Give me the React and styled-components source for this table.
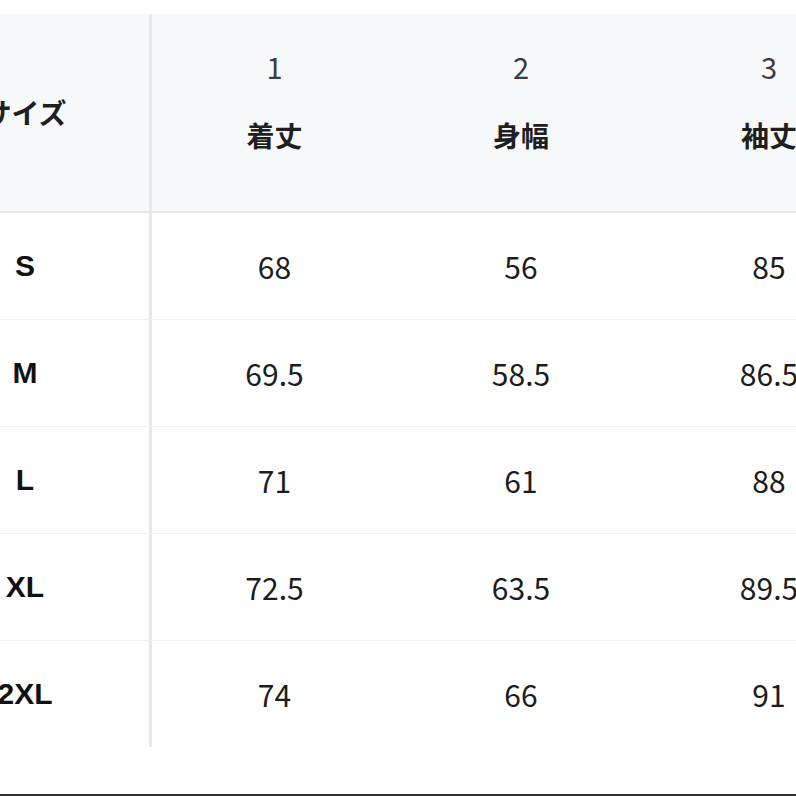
import React from "react";
import styled, { createGlobalStyle } from "styled-components";

const GlobalStyle = createGlobalStyle`
  html, body {
    margin: 0;
    padding: 0;
    background: #ffffff;
  }
  body {
    font-family: "Noto Sans CJK JP", "Noto Sans", sans-serif;
    color: #222;
  }
`;

const columns = [
  { no: "1", label: "着丈" },
  { no: "2", label: "身幅" },
  { no: "3", label: "袖丈" },
];

const rows = [
  { size: "S", values: ["68", "56", "85"] },
  { size: "M", values: ["69.5", "58.5", "86.5"] },
  { size: "L", values: ["71", "61", "88"] },
  { size: "XL", values: ["72.5", "63.5", "89.5"] },
  { size: "2XL", values: ["74", "66", "91"] },
];

const App = () => {
  return (
    <>
      <GlobalStyle />
      <Page>
        <Viewport>
          <Table>
            <HeaderRow>
              <SizeHead>サイズ</SizeHead>
              {columns.map((col) => (
                <ColHead key={col.no}>
                  <ColNo>{col.no}</ColNo>
                  <ColLabel>{col.label}</ColLabel>
                </ColHead>
              ))}
            </HeaderRow>
            {rows.map((row, i) => (
              <BodyRow key={row.size} last={i === rows.length - 1}>
                <SizeCell>{row.size}</SizeCell>
                {row.values.map((v, j) => (
                  <ValueCell key={j}>{v}</ValueCell>
                ))}
              </BodyRow>
            ))}
          </Table>
        </Viewport>
        <BottomBar />
      </Page>
    </>
  );
};

const Page = styled.div`
  width: 796px;
  height: 796px;
  display: flex;
  flex-direction: column;
  overflow: hidden;
  background: #fff;
`;

const Viewport = styled.div`
  flex: 1;
  overflow: hidden;
  padding-top: 14px;
`;

const Table = styled.div`
  width: 992px;
  margin-left: -99px;
  display: flex;
  flex-direction: column;
`;

const gridCols = "251px 245px 248px 248px";

const HeaderRow = styled.div`
  display: grid;
  grid-template-columns: ${gridCols};
  height: 197px;
  background: #f7f8fa;
  border-bottom: 2px solid #e6e7ea;
`;

const SizeHead = styled.div`
  display: flex;
  align-items: center;
  justify-content: center;
  font-size: 28px;
  font-weight: 700;
  color: #1f1f1f;
  border-right: 3px solid #e6e7ea;
  padding-bottom: 2px;
`;

const ColHead = styled.div`
  display: flex;
  flex-direction: column;
  align-items: center;
  padding-top: 32px;
  gap: 29px;
`;

const ColNo = styled.div`
  font-size: 29px;
  line-height: 40px;
  font-weight: 400;
  color: #3c3c3c;
`;

const ColLabel = styled.div`
  font-size: 28px;
  line-height: 40px;
  font-weight: 700;
  color: #1f1f1f;
`;

const BodyRow = styled.div`
  display: grid;
  grid-template-columns: ${gridCols};
  height: 107px;
  border-bottom: 1px solid ${(p) => (p.last ? "transparent" : "#f2f2f3")};
  box-sizing: border-box;
`;

const SizeCell = styled.div`
  display: flex;
  align-items: center;
  justify-content: center;
  font-family: "Liberation Sans", Arial, sans-serif;
  font-size: 30px;
  font-weight: 700;
  color: #111;
  border-right: 3px solid #e6e7ea;
  background: #fff;
`;

const ValueCell = styled.div`
  display: flex;
  align-items: center;
  justify-content: center;
  font-size: 30px;
  font-weight: 400;
  color: #1c1c1c;
`;

const BottomBar = styled.div`
  height: 2px;
  background: #2e2e2e;
  flex-shrink: 0;
`;

export default App;
